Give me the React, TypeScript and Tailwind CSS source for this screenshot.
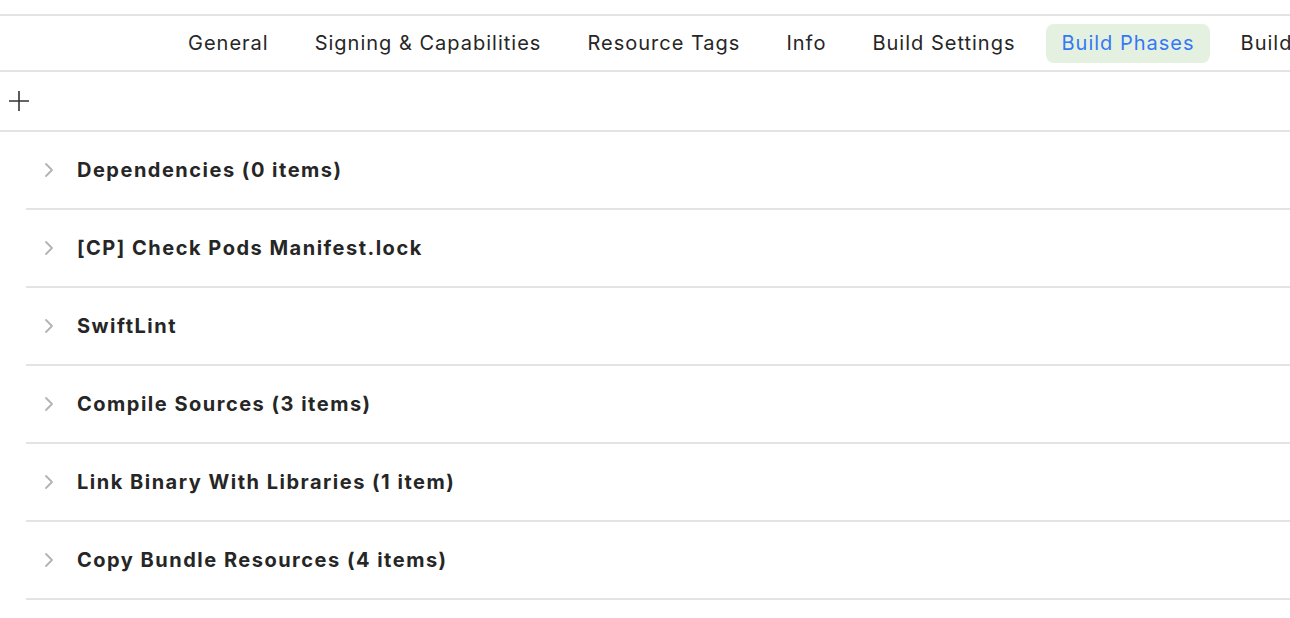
import React from 'react';

const tabs = ['General', 'Signing & Capabilities', 'Resource Tags', 'Info', 'Build Settings', 'Build Phases', 'Build Rules'];

const phases = [
  'Dependencies (0 items)',
  '[CP] Check Pods Manifest.lock',
  'SwiftLint',
  'Compile Sources (3 items)',
  'Link Binary With Libraries (1 item)',
  'Copy Bundle Resources (4 items)',
];

const Chevron = () => (
  <svg width="12" height="16" viewBox="0 0 12 16" className="shrink-0">
    <path d="M3 2 L9 8 L3 14" fill="none" stroke="#b3b3b3" strokeWidth="1.8" strokeLinecap="round" strokeLinejoin="round" />
  </svg>
);

const App: React.FC = () => {
  return (
    <div className="w-[1290px] h-[618px] bg-white overflow-hidden font-['Inter','Liberation_Sans',sans-serif] text-[#262626]">
      <div className="h-[14px]" />
      <div className="h-[58px] border-y-2 border-[#e3e3e3] flex items-center pl-[173px] gap-[16px] overflow-hidden whitespace-nowrap">
        {tabs.map((t) => {
          const active = t === 'Build Phases';
          return (
            <div
              key={t}
              className={`px-[15px] h-[39px] flex items-center rounded-[8px] text-[20px] tracking-[1px] shrink-0 ${
                active ? 'bg-[#e5f1e0] text-[#3478f6]' : ''
              }`}
            >
              {t}
            </div>
          );
        })}
      </div>
      <div className="h-[60px] border-b-2 border-[#e3e3e3] flex items-center pl-[8px]">
        <svg width="22" height="22" viewBox="0 0 22 22">
          <path d="M11 1 V21 M1 11 H21" stroke="#333" strokeWidth="1.6" />
        </svg>
      </div>
      <ul className="pl-[26px]">
        {phases.map((p) => (
          <li key={p} className="h-[78px] border-b-2 border-[#e3e3e3] flex items-center gap-[22px] pl-[17px]">
            <Chevron />
            <span className="text-[20px] font-bold tracking-[1.5px]">{p}</span>
          </li>
        ))}
      </ul>
    </div>
  );
};

export default App;
